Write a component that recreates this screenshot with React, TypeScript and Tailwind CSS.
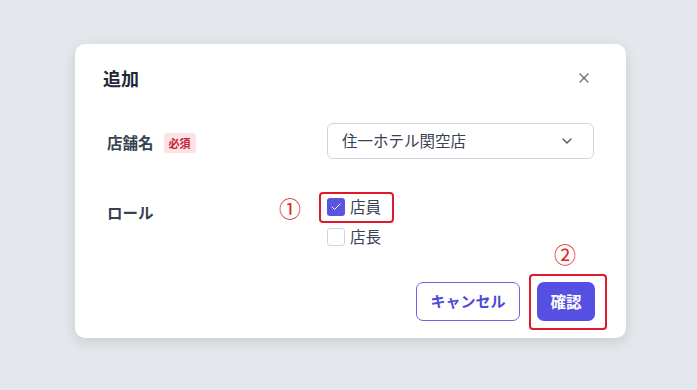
import { Check, ChevronDown, X } from "lucide-react";

const font = { fontFamily: '"Noto Sans CJK JP", "Noto Sans", sans-serif' };

export default function App() {
  return (
    <div className="w-[697px] h-[390px] bg-[#e4e7eb] flex" style={font}>
      <div className="relative ml-[75px] mt-[44px] w-[551px] h-[294px] bg-white rounded-[10px] shadow-[0_4px_14px_rgba(0,0,0,0.12)] flex flex-col">
        {/* Title */}
        <div className="flex items-center justify-between pl-[28px] pr-[34px] pt-[22px]">
          <h2 className="h-[24px] leading-[24px] text-[18px] font-bold text-[#1f2937]">
            追加
          </h2>
          <X className="h-[16px] w-[16px] text-[#6b7280]" strokeWidth={2} />
        </div>

        {/* Store */}
        <div className="flex items-center pl-[32px] pr-[32px] mt-[33px]">
          <div className="w-[220px] mt-[4px] flex items-center gap-[10px]">
            <span className="text-[15.5px] font-bold text-[#374151]">店舗名</span>
            <span className="h-[20px] px-[5px] rounded-[3px] bg-[#fde2e4] text-[11px] font-bold text-[#c81e3a] leading-[20px]">
              必須
            </span>
          </div>
          <button className="flex-1 h-[36px] rounded-[6px] border border-[#d1d5db] flex items-center justify-between pl-[14px] pr-[18px]">
            <span className="text-[15.5px] text-[#374151]">住一ホテル関空店</span>
            <ChevronDown className="h-[16px] w-[16px] text-[#4b5563]" strokeWidth={2} />
          </button>
        </div>

        {/* Role */}
        <div className="flex items-start pl-[32px] mt-[33px]">
          <div className="w-[220px] mt-[10px] h-[20px] leading-[20px] text-[15.5px] font-bold text-[#374151]">
            ロール
          </div>
          <div className="flex flex-col">
            <label className="h-[30px] flex items-center gap-[5px]">
              <span className="w-[18px] h-[18px] rounded-[3px] bg-[#5a55e0] flex items-center justify-center">
                <Check className="w-[12px] h-[12px] text-white" strokeWidth={2} />
              </span>
              <span className="text-[15.5px] text-[#374151]">店員</span>
            </label>
            <label className="h-[30px] flex items-center gap-[5px]">
              <span className="w-[18px] h-[18px] rounded-[3px] border border-[#d1d5db] bg-white" />
              <span className="text-[15.5px] text-[#374151]">店長</span>
            </label>
          </div>
        </div>

        {/* Actions */}
        <div className="flex justify-end gap-[17px] pr-[31px] mt-[30px]">
          <button className="w-[104px] h-[39px] rounded-[7px] border border-[#6b66dc] text-[15px] font-bold text-[#4f49d6]">
            キャンセル
          </button>
          <button className="w-[58px] h-[39px] rounded-[7px] bg-[#5550e2] text-[15.5px] font-bold text-white">
            確認
          </button>
        </div>

        {/* annotations */}
        <span className="absolute left-[215px] top-[163px] -translate-x-1/2 -translate-y-1/2 text-[22px] leading-none text-[#e02424]">
          ①
        </span>
        <div className="absolute left-[244px] top-[148px] w-[75px] h-[31px] border-2 border-[#e0182d] rounded-[4px]" />
        <span className="absolute left-[490px] top-[209px] -translate-x-1/2 -translate-y-1/2 text-[22px] leading-none text-[#e02424]">
          ②
        </span>
        <div className="absolute left-[454px] top-[230px] w-[78px] h-[56px] border-2 border-[#e0182d] rounded-[4px]" />
      </div>
    </div>
  );
}
